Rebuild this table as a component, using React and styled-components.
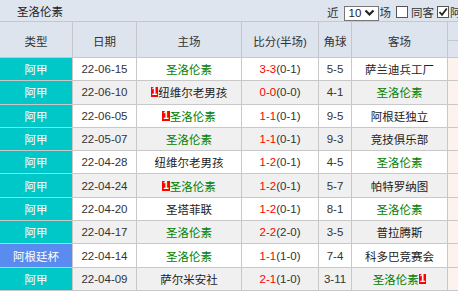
import React from "react";
import styled, { createGlobalStyle } from "styled-components";

const GlobalStyle = createGlobalStyle`
  html, body {
    margin: 0;
    padding: 0;
    background: #fff;
    overflow: hidden;
  }
  body {
    font-family: "Liberation Sans", "Noto Sans CJK SC", sans-serif;
    font-size: 11.5px;
    color: #333;
  }
`;

const COLS = "73px 64px 105px 77px 33px 96px 80px";

const rows = [
  { type: "阿甲", date: "22-06-15", home: "圣洛伦素", homeOwn: true, score: "3-3", half: "0-1", corner: "5-5", away: "萨兰迪兵工厂" },
  { type: "阿甲", date: "22-06-10", home: "纽维尔老男孩", homeRed: 1, score: "0-0", half: "0-0", corner: "4-1", away: "圣洛伦素", awayOwn: true },
  { type: "阿甲", date: "22-06-05", home: "圣洛伦素", homeOwn: true, homeRed: 1, score: "1-1", half: "0-1", corner: "9-5", away: "阿根廷独立" },
  { type: "阿甲", date: "22-05-07", home: "圣洛伦素", homeOwn: true, score: "1-1", half: "0-1", corner: "9-3", away: "竞技俱乐部" },
  { type: "阿甲", date: "22-04-28", home: "纽维尔老男孩", score: "1-2", half: "0-1", corner: "4-5", away: "圣洛伦素", awayOwn: true },
  { type: "阿甲", date: "22-04-24", home: "圣洛伦素", homeOwn: true, homeRed: 1, score: "1-2", half: "0-1", corner: "5-7", away: "帕特罗纳图" },
  { type: "阿甲", date: "22-04-20", home: "圣塔菲联", score: "1-2", half: "0-1", corner: "8-1", away: "圣洛伦素", awayOwn: true },
  { type: "阿甲", date: "22-04-17", home: "圣洛伦素", homeOwn: true, score: "2-2", half: "2-0", corner: "3-5", away: "普拉腾斯" },
  { type: "阿根廷杯", cup: true, date: "22-04-14", home: "圣洛伦素", homeOwn: true, score: "1-1", half: "1-0", corner: "7-4", away: "科多巴竞赛会" },
  { type: "阿甲", date: "22-04-09", home: "萨尔米安社", score: "2-1", half: "1-0", corner: "3-11", away: "圣洛伦素", awayOwn: true, awayRed: 1 },
];

function App() {
  return (
    <Wrap>
      <GlobalStyle />
      <TopBar>
        <Title>圣洛伦素</Title>
        <Controls>
          <Label>近</Label>
          <FakeSelect>
            10
            <svg width="11" height="8" viewBox="0 0 11 8">
              <polyline points="1.5,1.5 5.5,5.5 9.5,1.5" fill="none" stroke="#222" strokeWidth="2.2" />
            </svg>
          </FakeSelect>
          <Label>场</Label>
          <Check $gap={5} />
          <Label>同客</Label>
          <Check $gap={3}>
            <svg width="10" height="10" viewBox="0 0 10 10">
              <polyline points="1.5,5 4,7.8 8.8,1.5" fill="none" stroke="#222" strokeWidth="1.8" />
            </svg>
          </Check>
          <Label>阿甲</Label>
        </Controls>
      </TopBar>

      <HeadRow>
        <HeadCell>类型</HeadCell>
        <HeadCell>日期</HeadCell>
        <HeadCell>主场</HeadCell>
        <HeadCell>比分(半场)</HeadCell>
        <HeadCell>角球</HeadCell>
        <HeadCell>客场</HeadCell>
        <SplitHead>
          <div />
          <div />
        </SplitHead>
      </HeadRow>

      {rows.map((r, i) => (
        <Row key={i} $alt={i % 2 === 1}>
          <TypeCell $cup={r.cup}>{r.type}</TypeCell>
          <Cell>{r.date}</Cell>
          <Cell>
            <Team $own={r.homeOwn}>
              {r.homeRed && <RedCard>{r.homeRed}</RedCard>}
              {r.home}
            </Team>
          </Cell>
          <Cell>
            <Score>{r.score}</Score>({r.half})
          </Cell>
          <Cell>{r.corner}</Cell>
          <Cell>
            <Team $own={r.awayOwn}>
              {r.away}
              {r.awayRed && <RedCard>{r.awayRed}</RedCard>}
            </Team>
          </Cell>
          <ExtraCell />
        </Row>
      ))}
    </Wrap>
  );
}

const Wrap = styled.div`
  width: 528px;
`;

const TopBar = styled.div`
  display: flex;
  align-items: center;
  height: 22px;
  background: #dfe5ee;
  border-bottom: 1px solid #c4c8cc;
  box-sizing: border-box;
  white-space: nowrap;
`;

const Title = styled.div`
  padding-left: 17px;
  width: 46px;
  color: #222;
`;

const Controls = styled.div`
  display: flex;
  align-items: center;
  margin-left: 264px;
  padding-top: 3px;
  color: #333;
`;

const Label = styled.span`
  font-size: 11.5px;
`;

const FakeSelect = styled.div`
  display: flex;
  align-items: center;
  justify-content: space-between;
  width: 35px;
  height: 15px;
  box-sizing: border-box;
  padding: 0 3px 0 4px;
  border: 1px solid #777;
  background: #fff;
  font-size: 11.5px;
  color: #222;
  margin: 2px 1px 0 5px;
`;

const Check = styled.div`
  width: 12px;
  height: 12px;
  box-sizing: border-box;
  border: 1px solid #555;
  background: #fff;
  display: flex;
  align-items: center;
  justify-content: center;
  margin: 0 ${(p) => (p.$gap > 3 ? 3 : 1)}px 0 ${(p) => p.$gap}px;
`;

const HeadRow = styled.div`
  display: grid;
  grid-template-columns: ${COLS};
  height: 36px;
  background: #dde4ee;
  border-bottom: 1px solid #c4c8cc;
  box-sizing: border-box;
`;

const HeadCell = styled.div`
  display: flex;
  align-items: center;
  justify-content: center;
  border-right: 1px solid #c4c8cc;
  color: #333;
  padding-top: 2px;
`;

const SplitHead = styled.div`
  display: grid;
  grid-template-rows: 19px 1fr;
  & > div:first-child {
    border-bottom: 1px solid #c4c8cc;
  }
`;

const Row = styled.div`
  display: grid;
  grid-template-columns: ${COLS};
  height: 23.3px;
  box-sizing: border-box;
  border-bottom: 1px solid #c8c8c8;
  background: ${(p) => (p.$alt ? "#f0f0f0" : "#fff")};
`;

const Cell = styled.div`
  display: flex;
  align-items: center;
  justify-content: center;
  border-right: 1px solid #c8c8c8;
  color: #333;
  white-space: nowrap;
`;

const TypeCell = styled(Cell)`
  background: ${(p) => (p.$cup ? "#5a8cf0" : "#00c8c8")};
  color: #fff;
`;

const ExtraCell = styled.div`
  background: #fcf3ee;
`;

const Team = styled.span`
  display: inline-flex;
  align-items: center;
  color: ${(p) => (p.$own ? "#008000" : "#222")};
`;

const Score = styled.span`
  color: #f00;
`;

const RedCard = styled.span`
  display: inline-block;
  background: #f00;
  color: #fff;
  font-weight: bold;
  font-size: 10px;
  line-height: 10px;
  padding: 0 1px;
`;

export default App;
